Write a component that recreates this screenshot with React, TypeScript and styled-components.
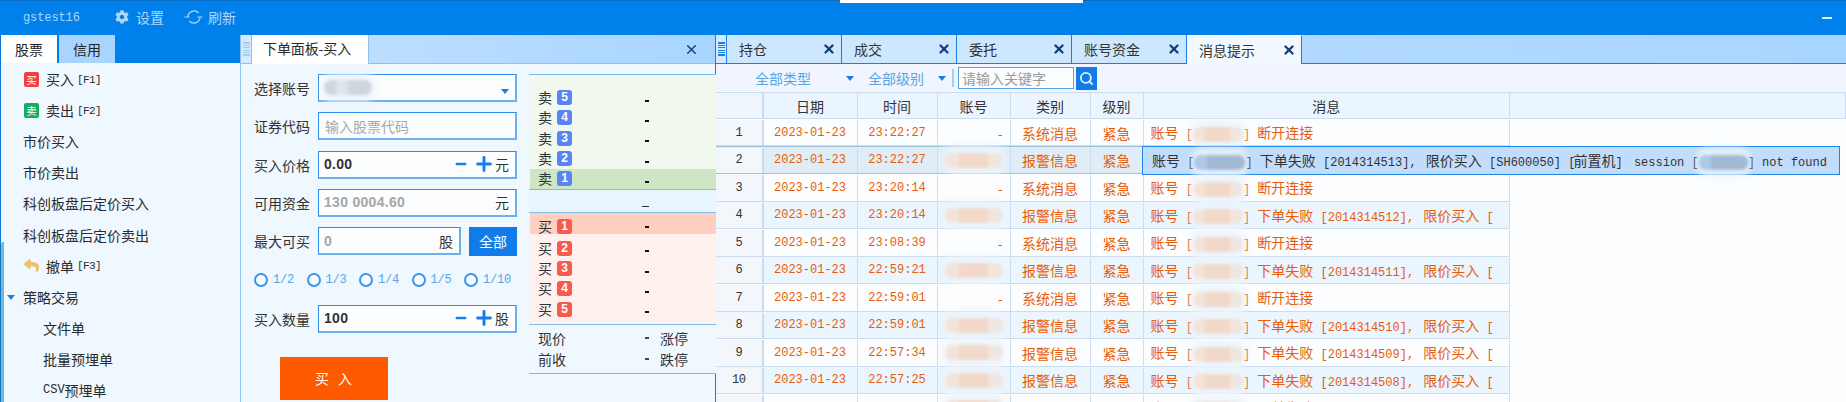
import React from 'react';
import styled, { createGlobalStyle } from 'styled-components';
import { FaCog, FaReply } from 'react-icons/fa';
import { Plus, Minus, Search, X } from 'lucide-react';

const CJK = '"Noto Sans CJK SC", "Liberation Sans", sans-serif';
const MONO = '"Liberation Mono", "DejaVu Sans Mono", monospace';

const Global = createGlobalStyle`
  html, body { margin: 0; padding: 0; height: 402px; overflow: hidden; background: #f0f7ff; }
  * { box-sizing: border-box; }
  #root { height: 402px; overflow: hidden; font-family: ${CJK}; font-size: 14px; color: #333; }
`;

const Shell = styled.div`display: flex; flex-direction: column; width: 1846px; height: 402px; overflow: hidden;`;
const Top = styled.header`
  position: relative; flex: 0 0 35px; display: flex; align-items: center; background: #0080ea;
  border-top: 1px solid #0a6bc6; padding: 0 14px 0 23px; color: #aed6f8;
`;
const TopNotch = styled.div`position: absolute; left: 840px; top: -1px; width: 243px; height: 3px; background: #fff;`;
const UserName = styled.span`font: 12px ${MONO}; letter-spacing: -.1px; width: 92px; margin-top: -1px;`;
const TopAction = styled.span<{ $gap: number }>`display: inline-flex; align-items: center; gap: ${p => p.$gap}px; width: 69px; font-size: 14px; line-height: 20px; margin-top: -2px;`;
const TopMin = styled.span`margin-left: auto; width: 10px; height: 2px; background: #dff0ff; margin-top: -1px;`;
const Main = styled.main`flex: 1; display: flex; min-height: 0;`;

const Side = styled.aside`flex: 0 0 241px; background: #eff7ff; border-right: 1px solid #8fc1ee; border-left: 1px solid #0b78dc; position: relative; overflow: hidden;`;
const SideStrip = styled.div`position: absolute; left: 0; top: 207px; width: 3px; bottom: 0; background: #7db5c6; border-radius: 2px 0 0 0;`;
const SideTabs = styled.div`display: flex; height: 28px; background: #0080ea; gap: 2px;`;
const SideTab = styled.div<{ $on?: boolean }>`
  width: 56px; display: flex; align-items: center; justify-content: center; color: #222;
  background: ${p => (p.$on ? '#ffffff' : '#a9d4ff')}; line-height: 28px;
`;
const Menu = styled.div`display: flex; flex-direction: column; padding-top: 0.5px;`;
const MenuItem = styled.div<{ $indent: number }>`
  height: 31.1px; display: flex; align-items: center; padding-left: ${p => p.$indent}px; color: #2b2b2b; white-space: nowrap; position: relative;
`;
const MenuIcon = styled.span<{ $bg: string }>`
  width: 15px; height: 15px; border-radius: 2px; background: ${p => p.$bg}; color: #fff; font-size: 10.5px; line-height: 15px;
  text-align: center; margin-right: 7px; flex: none;
`;
const UndoIcon = styled.span`display: inline-flex; width: 15px; margin-right: 7px; color: #ecc068;`;
const Key = styled.span`font: 11px/20px ${MONO}; letter-spacing: -.6px; margin-left: 3px; padding-top: 1px;`;
const Caret = styled.span<{ $c?: string }>`
  display: inline-block; width: 0; height: 0; border-left: 4.5px solid transparent; border-right: 4.5px solid transparent;
  border-top: 5px solid ${p => p.$c || '#1a7ee8'};
`;
const TreeCaret = styled(Caret)`position: absolute; left: 6px; top: 14px;`;

const Order = styled.section`flex: 0 0 475px; display: flex; flex-direction: column; background: #eff7ff; border-right: 1px solid #1a7ed8;`;
const OrderHead = styled.div`height: 29px; display: flex; align-items: stretch; background: linear-gradient(90deg, #c4e2ff, #a8d5ff); border-bottom: 1px solid #8fc1ee;`;
const Handle = styled.div<{ $strong?: boolean }>`
  flex: 0 0 11px; background: #d5eafe; display: flex; flex-direction: column; gap: 1.2px; align-items: center; justify-content: center;
  border-right: 1px solid ${p => (p.$strong ? '#1a7ee8' : '#8fc1ee')};
  i { display: block; width: 7px; height: 1.2px; background: ${p => (p.$strong ? '#1a7ee8' : '#a4cdf2')}; }
`;
const OrderTab = styled.div`width: 117px; background: #fff; padding-left: 11px; line-height: 27px; border-right: 1px solid #8fc1ee; margin-bottom: -1px; color: #2b2b2b; white-space: nowrap; letter-spacing: -.1px;`;
const PanelClose = styled.span`margin-left: auto; margin-right: 16px; align-self: center; color: #123f80; display: inline-flex; margin-top: 1px;`;
const OrderBody = styled.div`flex: 1; display: flex; padding: 10px 0 0 13px;`;
const Form = styled.div`flex: 0 0 263px; display: flex; flex-direction: column; gap: 10.25px;`;
const Row = styled.div`display: flex; align-items: center; height: 28px;`;
const Label = styled.label`flex: 0 0 64px; color: #333; white-space: nowrap;`;
const Field = styled.div`
  flex: 1; height: 28px; display: flex; align-items: center; padding: 0 6px 0 5px; background: #fbfdff;
  border: 1px solid #2b8df0; border-right-width: 2px; border-bottom-width: 2px; border-right-color: #6db0f2; border-bottom-color: #6db0f2; position: relative;
`;
const Placeholder = styled.span`color: #a8a8a8; margin-left: 1px;`;
const Num = styled.span<{ $muted?: boolean }>`font: bold 14px "Liberation Sans", sans-serif; color: ${p => (p.$muted ? '#a6a6a6' : '#333')}; letter-spacing: .3px;`;
const Unit = styled.span`color: #333; margin-left: auto;`;
const Steps = styled.span`margin-left: auto; display: inline-flex; align-items: center; color: #1a7ee8; gap: 5px;`;
const AllButton = styled.button`flex: 0 0 48px; height: 29px; margin-left: 8px; background: #117ce9; border: 0; color: #fff; font: 14px ${CJK}; padding: 0;`;
const Radios = styled.div`display: flex; height: 14px; margin-top: 8px; margin-bottom: 7px;`;
const RadioItem = styled.span`flex: 0 0 52.5px; display: inline-flex; align-items: center; gap: 5px; color: #5aa5e0; font: 12px ${MONO}; letter-spacing: -.2px; white-space: nowrap;`;
const RadioDot = styled.i`width: 14px; height: 14px; flex: none; border-radius: 50%; border: 2px solid #3b95f0; background: #f7fbff;`;
const BuyButton = styled.button`align-self: flex-start; width: 108px; height: 43px; margin: 14px 0 0 26px; background: #ff5a00; border: 0; color: #fff; font: 14px ${CJK}; letter-spacing: 9px; padding: 0 0 0 8px;`;

const Book = styled.div`flex: 1; margin: 0 -1px 0 12px; height: 300px; display: flex; flex-direction: column; background: #eff7ff; position: relative; z-index: 1;`;
const BookBand = styled.div<{ $bg: string; $pad?: string }>`background: ${p => p.$bg}; border-top: 1px solid #7fbce8; padding: ${p => p.$pad || '0'}; display: flex; flex-direction: column;`;
const Level = styled.div<{ $h: number; $hi?: string; $mt?: number; $end?: boolean }>`
  height: ${p => p.$h}px; flex: none; display: flex; align-items: ${p => (p.$end ? 'flex-end' : 'center')}; padding-left: 8px; margin-left: 1px; margin-top: ${p => p.$mt || 0}px;
  background: ${p => p.$hi || 'transparent'}; line-height: 15px;
`;
const Badge = styled.b<{ $c: string }>`
  width: 15px; height: 15px; flex: none; border-radius: 3px; background: ${p => p.$c}; color: #fff; font: bold 12px/15px "Liberation Sans", sans-serif; text-align: center; margin-left: 5px;
`;
const LevelDash = styled.span`width: 4px; height: 2px; background: #111; margin: 0 0 6px 73px; align-self: flex-end;`;
const MidDash = styled.span`width: 7px; height: 1px; background: #333; margin: 12px 0 0 104px;`;
const QuoteRow = styled.div`height: 21px; display: flex; align-items: center; padding-left: 9px;`;
const QuoteDash = styled.span`width: 4px; height: 2px; background: #445; margin: 0 11px 0 79px;`;

const Right = styled.section`flex: 1; min-width: 0; display: flex; flex-direction: column; background: #fbfdff;`;
const TabBar = styled.div`height: 29px; display: flex; background: linear-gradient(90deg, #bcdeff, #a8d5ff); border-bottom: 1.5px solid #1a7ee8;`;
const DockTab = styled.div<{ $on?: boolean }>`
  flex: 0 0 115px; display: flex; align-items: center; justify-content: space-between; padding: 0 5px 0 12px; white-space: nowrap; color: #333;
  background: ${p => (p.$on ? '#f2f8ff' : '#cde7ff')}; border-right: 1.5px solid #1a7ee8; margin-bottom: ${p => (p.$on ? '-1.5px' : 0)};
  ${p => p.$on && 'border-bottom: 1.5px solid #1a7ee8; border-top: 1px solid #fff;'}
`;
const DockClose = styled.span`color: #123f80; display: inline-flex;`;
const Filters = styled.div`height: 29px; display: flex; align-items: center; background: #f0f5ff; border-bottom: 1px solid #cbdcee; padding: 0 0 0 39px; color: #5aa5e0;`;
const FilterText = styled.span<{ $w: number }>`width: ${p => p.$w}px; line-height: 20px; white-space: nowrap;`;
const FilterCaret = styled(Caret)<{ $gap: number }>`margin-right: ${p => p.$gap}px;`;
const FilterSep = styled.span`width: 2px; height: 18px; background: #a9cfee; margin-right: 4px;`;
const SearchBox = styled.div`width: 116px; height: 22px; border: 1px solid #5aa5e0; background: #fbfdff; color: #9a9a9a; padding-left: 3px; line-height: 20px; white-space: nowrap;`;
const SearchBtn = styled.button`width: 21px; height: 23px; margin-left: 2px; background: #117ce9; border: 0; padding: 0; color: #dff0ff; display: flex; align-items: center; justify-content: center;`;

const COLS = '47.5px 94px 80px 73px 80px 53px 366.5px';
const Table = styled.div`flex: 1; min-height: 0; overflow: hidden; position: relative; background: #fbfdff;`;
const HeadRow = styled.div`display: grid; grid-template-columns: ${COLS} 1fr; height: 26px; background: #ebf5ff; border-bottom: 1px solid #cbdcee;`;
const HeadCell = styled.div`display: flex; align-items: center; justify-content: center; border-right: 1px solid #cbdcee; color: #333; &:first-child { background: #f0f6fd; border-right-width: 2px; }`;
const BodyRow = styled.div<{ $alt?: boolean; $hot?: boolean }>`
  display: grid; grid-template-columns: ${COLS}; width: 794px; height: 27.5px; padding-top: 1px;
  background: ${p => (p.$hot ? '#e0edf7' : p.$alt ? '#ebf5fe' : '#fbfdff')};
  border-bottom: 1.5px solid ${p => (p.$hot ? '#9cc4de' : '#cbdcee')};
  ${p => p.$hot && 'box-shadow: 0 -1.5px 0 #9cc4de;'}
  position: relative;
`;
const Cell = styled.div<{ $end?: boolean }>`
  display: flex; align-items: center; justify-content: ${p => (p.$end ? 'flex-end' : 'center')}; white-space: nowrap; min-width: 0;
  border-right: 1px solid #cbdcee; color: #e85c0a; ${p => p.$end && 'padding-right: 7px;'}
`;
const IndexCell = styled(Cell)`background: #f3f6fa; color: #333; font: 12px ${MONO}; letter-spacing: -.5px; border-right: 2.5px solid #cbdcee; padding-right: 0;`;
const MonoCell = styled(Cell)`font: 12px ${MONO};`;
const MsgCell = styled.div`display: block; line-height: 25px; padding-left: 7px; white-space: nowrap; overflow: visible; color: #e85c0a; border-right: 1px solid #cbdcee;`;
const Latin = styled.span<{ $after?: number }>`font: 12px ${MONO}; white-space: pre; margin-right: ${p => p.$after || 0}px;`;
const Patch = styled.span<{ $w: number; $c: string }>`
  display: inline-block; width: ${p => p.$w}px; height: 15px; margin: -6px 0; vertical-align: middle;
  background: ${p => p.$c}; border-radius: 7px; filter: blur(1.5px); box-shadow: 0 -5px 6px 2px rgba(235,244,252,.9), 0 5px 6px 2px rgba(235,244,252,.9);
`;
const HoverTip = styled.div`
  position: absolute; left: 426px; top: 53px; width: 698px; height: 29px; background: #c2dcfb; border: 1px solid #1f86ec;
  padding-left: 9px; line-height: 27px; white-space: nowrap; color: #333; z-index: 2;
`;

const Bars = () => <><i /><i /><i /><i /><i /><i /></>;
const RefreshIcon = () => (
  <svg width="19" height="16" viewBox="0 0 19 16" fill="none" stroke="#aed6f8" strokeWidth="1.2">
    <path d="M4 8a6 6 0 0 1 10.5-4" />
    <path d="M16 8a6 6 0 0 1-10.5 4" />
    <path d="M0.5 8h5M13.5 8h5" />
  </svg>
);
const Stepper = () => (
  <Steps>
    <Minus size={14} strokeWidth={4.6} />
    <Plus size={22} strokeWidth={3.2} />
  </Steps>
);

const sells = [5, 4, 3, 2, 1];
const rows: [number, string, string, boolean, string][] = [
  [1, '23:22:27', '系统消息', false, ''],
  [2, '23:22:27', '报警信息', true, ''],
  [3, '23:20:14', '系统消息', false, ''],
  [4, '23:20:14', '报警信息', true, '2014314512'],
  [5, '23:08:39', '系统消息', false, ''],
  [6, '22:59:21', '报警信息', true, '2014314511'],
  [7, '22:59:01', '系统消息', false, ''],
  [8, '22:59:01', '报警信息', true, '2014314510'],
  [9, '22:57:34', '报警信息', true, '2014314509'],
  [10, '22:57:25', '报警信息', true, '2014314508'],
  [11, '22:57:25', '报警信息', true, '2014314507'],
];
const altRows = new Set([2, 4, 6, 8, 10]);
const warm = 'linear-gradient(90deg,#f3e3da 0 25%,#f1d8c9 25% 75%,#efe6e0 75%)';
const cool = 'linear-gradient(90deg,#adc8e6 0 25%,#a3b9d3 25%)';

export default function App() {
  return (
    <Shell>
      <Global />
      <Top>
        <TopNotch />
        <UserName>gstest16</UserName>
        <TopAction $gap={7}><FaCog size={14} />设置</TopAction>
        <TopAction $gap={5}><RefreshIcon />刷新</TopAction>
        <TopMin />
      </Top>
      <Main>
        <Side>
          <SideStrip />
          <SideTabs>
            <SideTab $on>股票</SideTab>
            <SideTab>信用</SideTab>
          </SideTabs>
          <Menu>
            <MenuItem $indent={23}><MenuIcon $bg="#f4403c">买</MenuIcon>买入<Key>[F1]</Key></MenuItem>
            <MenuItem $indent={23}><MenuIcon $bg="#1aab5e">卖</MenuIcon>卖出<Key>[F2]</Key></MenuItem>
            <MenuItem $indent={22}>市价买入</MenuItem>
            <MenuItem $indent={22}>市价卖出</MenuItem>
            <MenuItem $indent={22}>科创板盘后定价买入</MenuItem>
            <MenuItem $indent={22}>科创板盘后定价卖出</MenuItem>
            <MenuItem $indent={23}><UndoIcon><FaReply size={15} /></UndoIcon>撤单<Key>[F3]</Key></MenuItem>
            <MenuItem $indent={22}><TreeCaret />策略交易</MenuItem>
            <MenuItem $indent={42}>文件单</MenuItem>
            <MenuItem $indent={42}>批量预埋单</MenuItem>
            <MenuItem $indent={42}><Latin>CSV</Latin>预埋单</MenuItem>
          </Menu>
        </Side>
        <Order>
          <OrderHead>
            <Handle><Bars /></Handle>
            <OrderTab>下单面板-买入</OrderTab>
            <PanelClose><X size={15} strokeWidth={2.4} /></PanelClose>
          </OrderHead>
          <OrderBody>
            <Form>
              <Row>
                <Label>选择账号</Label>
                <Field>
                  <Patch $w={48} $c="linear-gradient(90deg,#cfd6de 0 25%,#dfe4ea 25% 50%,#cfd6de 50%)" />
                  <Unit><Caret /></Unit>
                </Field>
              </Row>
              <Row><Label>证券代码</Label><Field><Placeholder>输入股票代码</Placeholder></Field></Row>
              <Row><Label>买入价格</Label><Field><Num>0.00</Num><Stepper />元</Field></Row>
              <Row><Label>可用资金</Label><Field><Num $muted>130 0004.60</Num><Unit>元</Unit></Field></Row>
              <Row>
                <Label>最大可买</Label>
                <Field><Num $muted>0</Num><Unit>股</Unit></Field>
                <AllButton>全部</AllButton>
              </Row>
              <Radios>
                {['1/2', '1/3', '1/4', '1/5', '1/10'].map(t => (
                  <RadioItem key={t}><RadioDot />{t}</RadioItem>
                ))}
              </Radios>
              <Row><Label>买入数量</Label><Field><Num>100</Num><Stepper />股</Field></Row>
              <BuyButton>买入</BuyButton>
            </Form>
            <Book>
              <BookBand $bg="#f1f8ee" $pad="12.5px 0 0">
                {sells.map(n => (
                  <Level key={n} $h={20.3} $hi={n === 1 ? '#cfe6c4' : undefined}>
                    卖<Badge $c="#5a83f5">{n}</Badge><LevelDash />
                  </Level>
                ))}
              </BookBand>
              <BookBand $bg="#e8f4fe"><Level $h={22}><MidDash /></Level></BookBand>
              <BookBand $bg="#fff2ee" $pad="0 0 4.8px">
                <Level $h={21} $hi="#ffcfbf" $end>买<Badge $c="#f85a4c">1</Badge><LevelDash /></Level>
                {[2, 3, 4, 5].map(n => (
                  <Level key={n} $h={20.3} $mt={n === 2 ? 4 : 0}>
                    买<Badge $c="#f85a4c">{n}</Badge><LevelDash />
                  </Level>
                ))}
              </BookBand>
              <BookBand $bg="#eff7ff" $pad="2.5px 0 3.5px">
                <QuoteRow>现价<QuoteDash />涨停</QuoteRow>
                <QuoteRow>前收<QuoteDash />跌停</QuoteRow>
              </BookBand>
              <BookBand $bg="#eff7ff" />
            </Book>
          </OrderBody>
        </Order>
        <Right>
          <TabBar>
            <Handle $strong><Bars /></Handle>
            {['持仓', '成交', '委托', '账号资金', '消息提示'].map((t, i) => (
              <DockTab key={t} $on={i === 4}>
                {t}
                <DockClose><X size={14} strokeWidth={4} /></DockClose>
              </DockTab>
            ))}
          </TabBar>
          <Filters>
            <FilterText $w={90.5}>全部类型</FilterText><FilterCaret $gap={14.5} />
            <FilterText $w={69.5}>全部级别</FilterText><FilterCaret $gap={6.5} />
            <FilterSep />
            <SearchBox>请输入关键字</SearchBox>
            <SearchBtn><Search size={15} strokeWidth={3} /></SearchBtn>
          </Filters>
          <Table>
            <HeadRow>
              <HeadCell />
              {['日期', '时间', '账号', '类别', '级别', '消息'].map(t => <HeadCell key={t}>{t}</HeadCell>)}
              <HeadCell />
            </HeadRow>
            {rows.map(([n, time, kind, acct, code]) => (
              <BodyRow key={n} $alt={altRows.has(n)} $hot={n === 2}>
                <IndexCell>{n}</IndexCell>
                <MonoCell>2023-01-23</MonoCell>
                <MonoCell>{time}</MonoCell>
                {acct ? <Cell><Patch $w={58} $c={warm} /></Cell> : <Cell $end>-</Cell>}
                <Cell>{kind}</Cell>
                <Cell>紧急</Cell>
                {n === 2 ? <MsgCell /> : (
                  <MsgCell>
                    账号<Latin> [</Latin><Patch $w={50} $c={warm} /><Latin>] </Latin>
                    {code ? <>下单失败<Latin $after={2}>{` [${code}], `}</Latin>限价买入<Latin> [</Latin></> : <>断开连接</>}
                  </MsgCell>
                )}
              </BodyRow>
            ))}
            <HoverTip>
              账号<Latin> [</Latin><Patch $w={51} $c={cool} /><Latin>] </Latin>下单失败<Latin $after={2}> [2014314513], </Latin>限价买入<Latin $after={-2}> [SH600050] [</Latin>前置机<Latin $after={4}>] </Latin><Latin>session [</Latin><Patch $w={49} $c={cool} /><Latin>] not found</Latin>
            </HoverTip>
          </Table>
        </Right>
      </Main>
    </Shell>
  );
}
